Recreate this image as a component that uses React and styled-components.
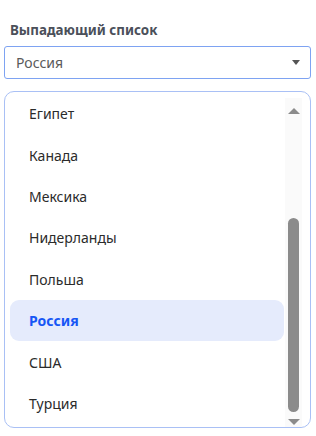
import React from "react";
import styled, { createGlobalStyle } from "styled-components";

const Global = createGlobalStyle`
  html, body { margin: 0; padding: 0; background: #fff; }
  body { font-family: "Noto Sans", "Open Sans", sans-serif; }
`;

const Page = styled.div`
  width: 316px;
  height: 436px;
  box-sizing: border-box;
  padding: 21px 5px 0 4px;
  display: flex;
  flex-direction: column;
`;

const Label = styled.div`
  font-size: 13.4px;
  font-weight: 700;
  color: #4b505a;
  line-height: 18px;
  padding-left: 6px;
  margin-bottom: 7px;
`;

const Select = styled.div`
  height: 33px;
  box-sizing: border-box;
  border: 1px solid #7ea3f2;
  border-radius: 3px;
  display: flex;
  align-items: center;
  justify-content: space-between;
  padding: 0 10px 0 11px;
  font-size: 14px;
  color: #5a5a5a;
`;

const Caret = styled.span`
  width: 0;
  height: 0;
  border-left: 4px solid transparent;
  border-right: 4px solid transparent;
  border-top: 5px solid #555;
`;

const ListBox = styled.div`
  margin-top: 12px;
  height: 337px;
  box-sizing: border-box;
  border: 1px solid #a9c0f5;
  border-radius: 10px;
  padding: 0 8px 0 5px;
  display: flex;
  overflow: hidden;
`;

const Options = styled.div`
  flex: 1;
  display: flex;
  flex-direction: column;
  padding-top: 1px;
  margin-right: 1px;
`;

const Item = styled.div`
  height: 41.4px;
  flex-shrink: 0;
  display: flex;
  align-items: center;
  padding-left: 19px;
  border-radius: 9px;
  font-size: 14px;
  color: ${(p) => (p.$active ? "#1656f5" : "#2b2b2b")};
  font-weight: ${(p) => (p.$active ? 700 : 400)};
  background: ${(p) => (p.$active ? "#e5ebfc" : "transparent")};
`;

const Track = styled.div`
  width: 17px;
  margin-top: 6px;
  background: #fafafa;
  display: flex;
  flex-direction: column;
  align-items: center;
  padding: 10px 0 2px 1px;
  box-sizing: border-box;
`;

const Arrow = styled.span`
  width: 0;
  height: 0;
  border-left: 6.5px solid transparent;
  border-right: 6.5px solid transparent;
  ${(p) =>
    p.$down
      ? "border-top: 6px solid #8b8b8b;"
      : "border-bottom: 6px solid #8b8b8b;"}
`;

const ThumbArea = styled.div`
  flex: 1;
  display: flex;
  flex-direction: column;
  justify-content: flex-end;
  padding: 4px 0 7px;
`;

const Thumb = styled.div`
  width: 11px;
  height: 194px;
  border-radius: 6px;
  background: #8b8b8b;
  margin-right: 1px;
`;

const countries = [
  "Египет",
  "Канада",
  "Мексика",
  "Нидерланды",
  "Польша",
  "Россия",
  "США",
  "Турция",
];

export default function App() {
  return (
    <>
      <Global />
      <Page>
        <Label>Выпадающий список</Label>
        <Select>
          <span>Россия</span>
          <Caret />
        </Select>
        <ListBox>
          <Options>
            {countries.map((c) => (
              <Item key={c} $active={c === "Россия"}>
                {c}
              </Item>
            ))}
          </Options>
          <Track>
            <Arrow />
            <ThumbArea>
              <Thumb />
            </ThumbArea>
            <Arrow $down />
          </Track>
        </ListBox>
      </Page>
    </>
  );
}
